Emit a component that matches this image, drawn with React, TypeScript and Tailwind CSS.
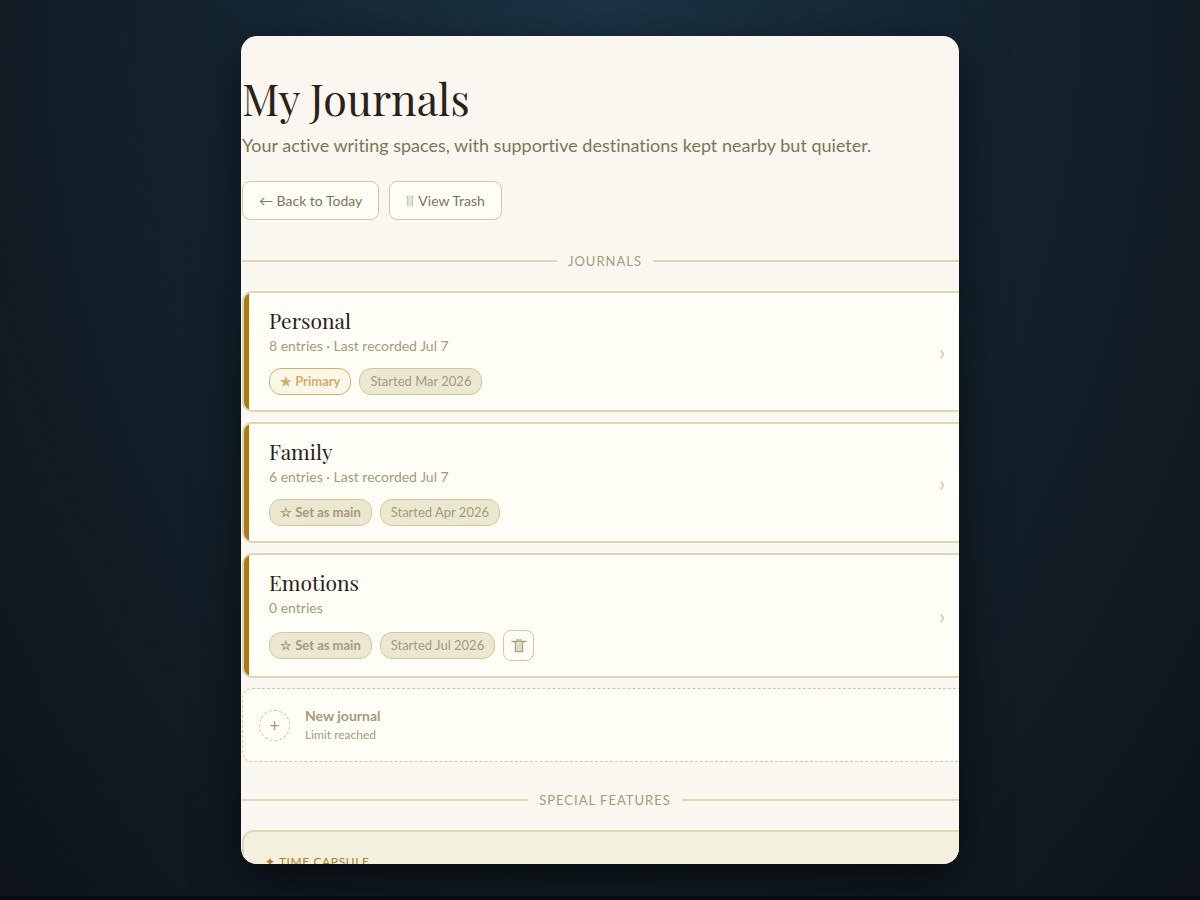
import { ReactNode } from "react";

type Journal = {
  name: string;
  meta: string;
  started: string;
  isPrimary?: boolean;
  canDelete?: boolean;
};

const journals: Journal[] = [
  {
    name: "Personal",
    meta: "8 entries · Last recorded Jul 7",
    started: "Started Mar 2026",
    isPrimary: true,
  },
  {
    name: "Family",
    meta: "6 entries · Last recorded Jul 7",
    started: "Started Apr 2026",
  },
  {
    name: "Emotions",
    meta: "0 entries",
    started: "Started Jul 2026",
    canDelete: true,
  },
];

function TrashIcon() {
  return (
    <svg
      className="shrink-0"
      width="16"
      height="16"
      viewBox="0 0 16 16"
      fill="none"
    >
      <path d="M0.5 3.5h15" stroke="#a89f7d" strokeWidth="1.5" />
      <path d="M5 2h6" stroke="#c0b99c" strokeWidth="1.4" />
      <path
        d="M4.5 4v9.500h7V4"
        fill="#e9e5d4"
        stroke="#b0a888"
        strokeWidth="1.5"
      />
      <path d="M7 5.500v7M9 5.500v7" stroke="#cfc9b2" strokeWidth="0.8" />
    </svg>
  );
}

function BinIcon() {
  return (
    <svg width="8" height="12" viewBox="0 0 8 12" fill="none">
      <path d="M0.500 1.500h7l-.6 10H1.100z" fill="#e6e6de" />
      <path d="M1.500 1v10M6.300 1v10" stroke="#cacac4" strokeWidth="1.3" />
      <path d="M3.800 2v8" stroke="#eadbd0" strokeWidth="1" />
      <path d="M0.500 1.200h3M5 1.200h2.500" stroke="#b9c1c2" strokeWidth="1" />
    </svg>
  );
}

function SectionTitle({ children }: { children: ReactNode }) {
  return (
    <div className="flex items-center gap-[11px]">
      <span className="h-0.5 flex-1 bg-[#ddd8b4]" />
      <h2 className="text-[13px] leading-5 tracking-[1px] uppercase text-[#a39b7b]">
        {children}
      </h2>
      <span className="h-0.5 flex-1 bg-[#ddd8b4]" />
    </div>
  );
}

function JournalCard({ journal }: { journal: Journal }) {
  return (
    <article className="flex overflow-hidden rounded-[10px] border-2 border-[#ddd8b4] bg-[#fffef6]">
      <div className="w-[5px] shrink-0 bg-[#ae7815]" />
      <div className="flex flex-1 items-center justify-between pr-[21px] pl-5">
        <div className="pt-[14px] pb-[15px]">
          <h3 className="font-['Playfair_Display','Liberation_Serif',serif] text-[21px] leading-[26px] text-[#2b2118]">
            {journal.name}
          </h3>
          <p className="mt-[3px] text-sm leading-5 text-[#a39b7b]">
            {journal.meta}
          </p>
          <div className="mt-3 flex items-center gap-2">
            {journal.isPrimary ? (
              <span className="rounded-xl border border-[#d2b072] bg-[#faf6e8] px-2.5 py-1 text-[13px] leading-[17px] font-bold text-[#cfb06c]">
                ★ Primary
              </span>
            ) : (
              <button className="rounded-xl border border-[#d0ca98] bg-[#ebe7d0] px-2.5 py-1 text-[13px] leading-[17px] font-bold text-[#a39b7b]">
                ☆ Set as main
              </button>
            )}
            <span className="rounded-xl border border-[#d0ca98] bg-[#ebe7d0] px-2.5 py-1 text-[13px] leading-[17px] text-[#a39b7b]">
              {journal.started}
            </span>
            {journal.canDelete && (
              <button
                aria-label="Delete journal"
                className="flex size-[31px] items-center justify-center rounded-lg border border-[#d0ca98] bg-[#fffef6]"
              >
                <TrashIcon />
              </button>
            )}
          </div>
        </div>
        <span className="text-xl leading-6 font-bold text-[#d8cfa3]">›</span>
      </div>
    </article>
  );
}

export default function App() {
  return (
    <div className="min-h-screen bg-[#0b0c14] font-['Lato',sans-serif] [font-variant-ligatures:none]">
      <div className="bg-[radial-gradient(ellipse_at_top,#1b3344_0%,#13212b_55%,#0e131b_100%)] pt-9 pb-8">
        <main className="mx-auto h-[92vh] max-w-[718px] overflow-hidden rounded-2xl bg-[#faf7f0] shadow-[0_16px_48px_rgba(0,0,0,0.6)]">
          {/* Content runs past the right edge of the panel and is clipped */}
          <div className="-mr-[9px] ml-px pt-9">
            <header>
              <h1 className="font-['Playfair_Display','Liberation_Serif',serif] text-[43px] leading-[52px] text-[#2b2118]">
                My Journals
              </h1>
              <p className="mt-[7px] text-lg leading-7 text-[#7d7558]">
                Your active writing spaces, with supportive destinations kept
                nearby but quieter.
              </p>
              <div className="mt-[22px] flex gap-2.5">
                <a
                  href="#today"
                  className="rounded-lg border border-[#d0ca98] bg-[#fffef6] px-4 py-2 text-sm leading-[21px] text-[#7d7558]"
                >
                  ← Back to Today
                </a>
                <a
                  href="#trash"
                  className="flex items-center gap-1 rounded-lg border border-[#d0ca98] bg-[#fffef6] px-4 py-2 text-sm leading-[21px] text-[#7d7558]"
                >
                  <BinIcon />
                  View Trash
                </a>
              </div>
            </header>

            <section className="mt-[31px]">
              <SectionTitle>Journals</SectionTitle>
              <div className="mt-5 flex flex-col gap-2.5">
                {journals.map((journal) => (
                  <JournalCard key={journal.name} journal={journal} />
                ))}

                <button
                  disabled
                  className="flex items-center gap-[15px] rounded-[10px] border border-dashed border-[#d0ca98] bg-[#fffef6] px-4 py-[17px] text-left"
                >
                  <span className="flex size-[31px] items-center justify-center rounded-full border border-dashed border-[#d0ca98] text-lg leading-none text-[#a39b7b]">
                    +
                  </span>
                  <span className="flex flex-col">
                    <span className="text-sm leading-5 font-bold text-[#a39b7b]">
                      New journal
                    </span>
                    <span className="text-xs leading-[18px] text-[#a39b7b]">
                      Limit reached
                    </span>
                  </span>
                </button>
              </div>
            </section>

            <section className="mt-7">
              <SectionTitle>Special Features</SectionTitle>
              <article className="mt-5 rounded-xl border-2 border-[#ddd8b4] bg-[#f3f0de] px-[21px] py-5">
                <p className="text-xs leading-5 tracking-wider uppercase text-[#ae7f22]">
                  ✦ Time Capsule
                </p>
              </article>
            </section>
          </div>
        </main>
      </div>
    </div>
  );
}
